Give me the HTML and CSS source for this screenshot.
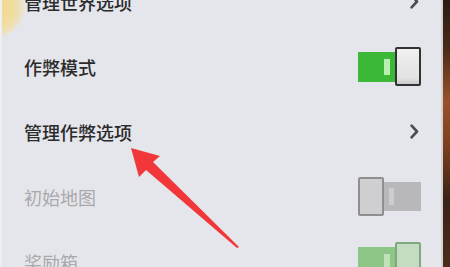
FILE: index.html
```html
<!DOCTYPE html>
<html lang="zh">
<head>
<meta charset="utf-8">
<link rel="stylesheet" href="styles.css">
</head>
<body>
<div class="screen">
  <div class="panel">
    <div class="glow"></div>
    <ul class="list">
      <li class="row">
        <span class="label">管理世界选项</span>
        <svg class="chev" width="9" height="15" viewBox="0 0 9 15"><path d="M1.6 1.6 L7 7.5 L1.6 13.4" fill="none" stroke="#4d4d4d" stroke-width="2.6" stroke-linecap="round" stroke-linejoin="round"/></svg>
      </li>
      <li class="row">
        <span class="label">作弊模式</span>
        <div class="toggle on">
          <div class="track"><span class="pip"></span></div>
          <div class="thumb"></div>
        </div>
      </li>
      <li class="row">
        <span class="label">管理作弊选项</span>
        <svg class="chev" width="9" height="15" viewBox="0 0 9 15"><path d="M1.6 1.6 L7 7.5 L1.6 13.4" fill="none" stroke="#4d4d4d" stroke-width="2.6" stroke-linecap="round" stroke-linejoin="round"/></svg>
      </li>
      <li class="row disabled">
        <span class="label">初始地图</span>
        <div class="toggle off">
          <div class="thumb"></div>
          <div class="track"><span class="pip"></span></div>
        </div>
      </li>
      <li class="row disabled">
        <span class="label">奖励箱</span>
        <div class="toggle on faded">
          <div class="track"><span class="pip"></span></div>
          <div class="thumb"></div>
        </div>
      </li>
    </ul>
    <svg class="arrow" width="450" height="267" viewBox="0 0 450 267">
      <polygon points="131,148 160,156 153,162 239,247 237,248 146,170 139,177" fill="#f2373a"/>
    </svg>
  </div>
  <div class="edge"></div>
</div>
</body>
</html>
```

FILE: styles.css
```css
html, body {
  margin: 0;
  padding: 0;
  width: 450px;
  height: 267px;
  overflow: hidden;
}

body {
  font-family: "Noto Sans CJK SC", "Noto Sans", sans-serif;
  background: #e5e6eb;
}

.screen {
  display: flex;
  width: 450px;
  height: 267px;
}

.panel {
  flex: 1;
  position: relative;
  background: #e5e6eb;
  border-left: 2px solid #eeeff2;
  border-right: 2px solid #d2d3d7;
  overflow: hidden;
}

.glow {
  position: absolute;
  left: -38px;
  top: -22px;
  width: 60px;
  height: 60px;
  border-radius: 50%;
  background: radial-gradient(circle, #f1d98e 0%, #f1dc9c 45%, rgba(241, 222, 160, 0.5) 65%, rgba(229, 230, 235, 0) 75%);
}

.list {
  list-style: none;
  margin: -31px 0 0 0;
  padding: 0;
  position: relative;
}

.row {
  height: 65px;
  display: flex;
  align-items: center;
  justify-content: space-between;
  padding: 0 20px 0 22px;
}

.label {
  font-size: 18px;
  font-weight: 500;
  color: #2b2b2b;
  letter-spacing: 0;
}

.disabled .label {
  font-weight: 400;
  color: #a9a9ab;
}

.chev {
  margin-right: 2px;
}

.toggle {
  display: flex;
  align-items: center;
  width: 63px;
  height: 39px;
}

.toggle .track {
  height: 30px;
  display: flex;
  align-items: center;
}

.toggle .thumb {
  box-sizing: border-box;
  width: 26px;
  height: 39px;
  border-radius: 2px;
}

.toggle.on .track {
  width: 39px;
  background: #3cb838;
  justify-content: flex-end;
  padding-right: 7px;
  box-sizing: border-box;
}

.toggle.on .thumb {
  margin-left: -2px;
  border: 2px solid #323232;
  background: linear-gradient(#f0f0f0, #e2e2e2 85%, #c9c9c9);
}

.toggle.on .pip {
  width: 6px;
  height: 16px;
  background: #b9f0ae;
}

.toggle.off .thumb {
  border: 2px solid #8f8f92;
  background: #cfcfd1;
}

.toggle.off .track {
  width: 37px;
  height: 29px;
  background: #b8b8ba;
  padding-left: 5px;
  box-sizing: border-box;
}

.toggle.off .pip {
  width: 5px;
  height: 17px;
  background: #cdcdcf;
}

.toggle.on.faded .track {
  background: #8cc787;
}

.toggle.on.faded .thumb {
  border-color: #7fa97c;
  background: #c4dcc1;
}

.toggle.on.faded .pip {
  background: #bfe2b9;
}

.arrow {
  position: absolute;
  left: -2px;
  top: 0;
}

.edge {
  width: 7px;
  background: linear-gradient(#2b1a12 0%, #4a2a18 18%, #98522a 38%, #7a3e1e 55%, #3a2216 75%, #4a2c1c 100%);
}
```
